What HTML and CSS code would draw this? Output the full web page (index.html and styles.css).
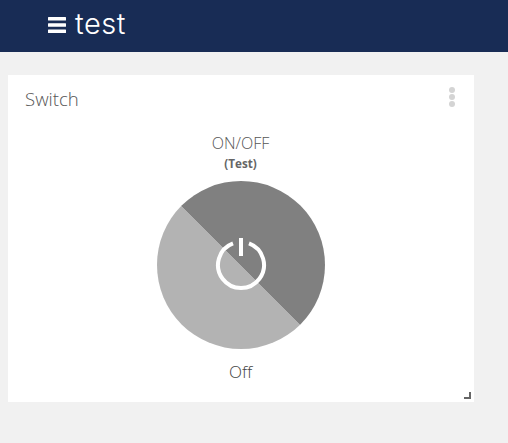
FILE: index.html
```html
<!DOCTYPE html>
<html lang="en">
<head>
    <meta charset="UTF-8">
    <meta name="viewport" content="width=device-width, initial-scale=1.0">
    <title>test</title>
    <link rel="stylesheet" href="styles.css">
</head>
<body>
    <header class="topbar">
        <svg class="menu-icon" viewBox="0 0 18 16" width="18" height="16">
            <rect x="0" y="0" width="18" height="3.6" rx="0.5"></rect>
            <rect x="0" y="6.2" width="18" height="3.6" rx="0.5"></rect>
            <rect x="0" y="12.4" width="18" height="3.6" rx="0.5"></rect>
        </svg>
        <h1 class="topbar-title">test</h1>
    </header>
    <main class="card">
        <div class="card-head">
            <h2 class="card-title">Switch</h2>
            <div class="card-menu">
                <span class="dot"></span>
                <span class="dot"></span>
                <span class="dot"></span>
            </div>
        </div>
        <div class="switch">
            <div class="switch-name">ON/OFF</div>
            <div class="switch-device">(Test)</div>
            <div class="switch-button">
                <svg class="power-icon" viewBox="0 0 54 54" width="54" height="54">
                    <path d="M19 6.4 A23 23 0 1 0 35 6.4"></path>
                    <line x1="27" y1="1" x2="27" y2="19"></line>
                </svg>
            </div>
            <div class="switch-state">Off</div>
        </div>
        <div class="resize-handle"></div>
    </main>
</body>
</html>
```

FILE: styles.css
```css
body {
    margin: 0;
    min-height: 100vh;
    background-color: #f1f1f1;
    font-family: "Open Sans", sans-serif;
    color: #555;
}

.topbar {
    display: flex;
    align-items: center;
    gap: 9px;
    height: 52px;
    padding-left: 48px;
    background-color: #182c55;
    color: #fff;
}

.menu-icon {
    fill: #fff;
    margin-bottom: 2px;
}

.topbar-title {
    margin: 0 0 4px;
    font-family: "Inter", sans-serif;
    font-size: 29px;
    font-weight: 300;
    letter-spacing: 0.5px;
    line-height: 48px;
}

.card {
    position: relative;
    width: 466px;
    height: 327px;
    margin: 23px 0 0 8px;
    background-color: #fff;
}

.card-head {
    display: flex;
    justify-content: space-between;
    padding: 11px 19px 0 17px;
}

.card-title {
    margin: 0;
    font-size: 18.6px;
    font-weight: 300;
    line-height: 26px;
    color: #555;
}

.card-menu {
    display: flex;
    flex-direction: column;
    gap: 1px;
    padding-top: 1px;
}

.dot {
    width: 6px;
    height: 6px;
    border-radius: 50%;
    background-color: #d4d4d4;
}

.switch {
    display: flex;
    flex-direction: column;
    align-items: center;
    margin-top: 20px;
    margin-left: -1px;
}

.switch-name {
    font-size: 16px;
    font-weight: 300;
    line-height: 23px;
    color: #555;
}

.switch-device {
    font-size: 11.7px;
    font-weight: 700;
    line-height: 16px;
    color: #666;
}

.switch-button {
    display: flex;
    align-items: center;
    justify-content: center;
    width: 168px;
    height: 168px;
    margin-top: 10px;
    border-radius: 50%;
    background: linear-gradient(45deg, #b3b3b3 50%, #808080 50%);
}

.power-icon {
    fill: none;
    stroke: #fff;
    stroke-width: 4px;
    margin-bottom: 2px;
}

.switch-state {
    margin-top: 11px;
    font-size: 17px;
    font-weight: 300;
    line-height: 24px;
    color: #444;
}

.resize-handle {
    position: absolute;
    right: 3px;
    bottom: 3px;
    width: 5px;
    height: 5px;
    border-right: 2px solid #666;
    border-bottom: 2px solid #666;
}
```
